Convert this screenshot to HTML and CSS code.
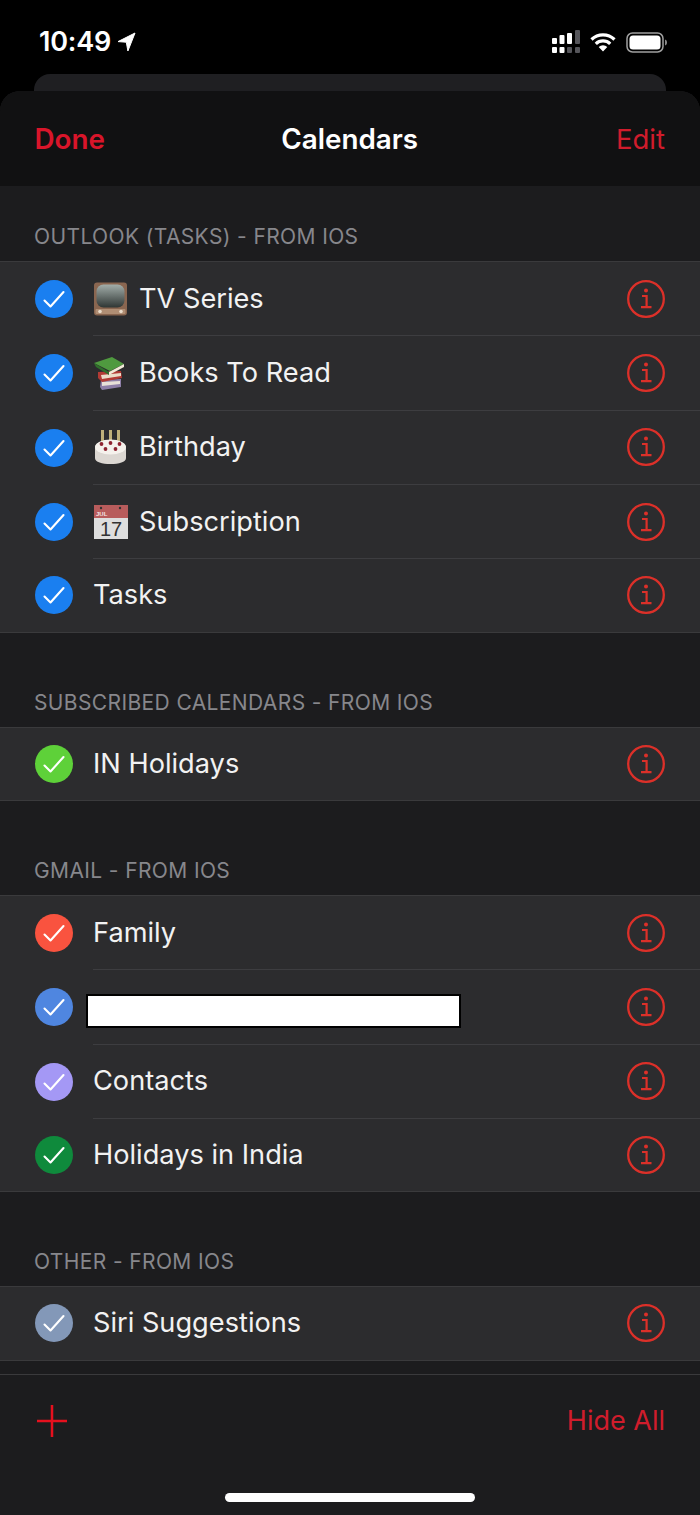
FILE: index.html
```html
<!DOCTYPE html>
<html lang="en">
<head>
<meta charset="utf-8">
<title>Calendars</title>
<link rel="stylesheet" href="styles.css">
</head>
<body>
<svg class="defs" width="0" height="0" aria-hidden="true">
  <defs>
    <symbol id="tick" viewBox="0 0 38 38"><path d="M9.500 20.500l6 6L28.500 12" fill="none" stroke="#fff" stroke-width="2.100" stroke-linecap="round" stroke-linejoin="round"/></symbol>
    <symbol id="info" viewBox="0 0 38 38"><circle cx="19" cy="19" r="17.800" fill="none" stroke="currentColor" stroke-width="2.300"/><circle cx="19" cy="10.500" r="2" fill="currentColor"/><path d="M15 16h4.600v11M14 27.200h10.500" fill="none" stroke="currentColor" stroke-width="2.200"/></symbol>
    <linearGradient id="tv-glass" x1="0" y1="0" x2="0" y2="1"><stop offset="0" stop-color="#a3aeaa"/><stop offset="1" stop-color="#2f3634"/></linearGradient>
  </defs>
</svg>
<div class="phone">
  <header class="status">
    <div class="status-left">
      <span class="time">10:49</span>
      <svg class="arrow" width="19" height="20" viewBox="0 0 19 20"><path d="M18 1L1 9.600l8.300.6 1.600 8.800z" fill="#fff" stroke="#fff" stroke-width="1" stroke-linejoin="round"/></svg>
    </div>
    <div class="status-right">
      <svg width="28" height="24" viewBox="0 0 28 24"><g fill="#fff"><rect x="0" y="8" width="5" height="6" rx="1"/><rect x="7.500" y="5" width="5" height="9" rx="1"/><rect x="15" y="3" width="5" height="11" rx="1"/><rect x="0" y="17" width="5" height="6" rx="1"/><rect x="7.500" y="17" width="5" height="6" rx="1"/></g><g fill="#55555a"><rect x="23" y="0" width="5" height="14" rx="1"/><rect x="15" y="17" width="5" height="6" rx="1"/><rect x="23" y="17" width="5" height="6" rx="1"/></g></svg>
      <svg width="26" height="20" viewBox="0 0 26 20"><path d="M1.500 7.500a16.500 16.500 0 0 1 23 0M5.800 11.800a10.500 10.500 0 0 1 14.400 0" fill="none" stroke="#fff" stroke-width="3.200"/><path d="M8.700 15l4.300 4.500 4.300-4.500a6 6 0 0 0-8.600 0z" fill="#fff"/></svg>
      <svg width="41" height="21" viewBox="0 0 41 21"><rect x="1" y="1" width="36" height="19" rx="5.500" fill="none" stroke="#a0a0a0" stroke-width="1.500"/><rect x="3.500" y="3.500" width="31" height="14" rx="3.500" fill="#fff"/><path d="M39 7.500c1.300.4 2 1.500 2 3s-.7 2.600-2 3z" fill="#8a8a8a"/></svg>
    </div>
  </header>
  <div class="back-card"></div>
  <main class="sheet">
    <nav class="nav">
      <a class="nav-done">Done</a>
      <h1 class="nav-title">Calendars</h1>
      <a class="nav-edit">Edit</a>
    </nav>

    <section class="group">
      <h2 class="group-title">OUTLOOK (TASKS) - FROM IOS</h2>
      <ul class="list">
        <li class="row">
          <span class="check c-blue"><svg width="38" height="38"><use href="#tick"/></svg></span>
          <div class="row-body">
            <svg class="emoji" width="36" height="36" viewBox="0 0 36 36"><rect x="1" y="1.500" width="33" height="33" rx="3" fill="#8a6650"/><rect x="3.500" y="3.500" width="28" height="23" rx="7" fill="url(#tv-glass)"/><rect x="2.500" y="28" width="30" height="5" rx="1" fill="#b08e74"/><circle cx="7" cy="30.500" r="1.800" fill="#e9dccb"/><circle cx="28" cy="30.500" r="1.800" fill="#e9dccb"/></svg>
            <span class="row-label">TV Series</span>
            <svg class="info" width="38" height="38"><use href="#info"/></svg>
          </div>
        </li>
        <li class="row">
          <span class="check c-blue"><svg width="38" height="38"><use href="#tick"/></svg></span>
          <div class="row-body">
            <svg class="emoji" width="36" height="36" viewBox="0 0 36 36"><path d="M8 25l20-1v8L9 35l-2-3z" fill="#8f7fa8"/><path d="M9 27l18-1v3L9 31z" fill="#e8e0d8"/><path d="M5 17l23-1 1 7-20 4-4-4z" fill="#b23a34"/><path d="M8 20l20-2v3L9 24z" fill="#ecdcc8"/><path d="M1 8l18-6 12 7-14 7z" fill="#4f9a3f"/><path d="M1 8l15 9v3L3 12z" fill="#2f6f2b"/><path d="M16 17l15-8v3l-15 8z" fill="#f2ead8"/></svg>
            <span class="row-label">Books To Read</span>
            <svg class="info" width="38" height="38"><use href="#info"/></svg>
          </div>
        </li>
        <li class="row">
          <span class="check c-blue"><svg width="38" height="38"><use href="#tick"/></svg></span>
          <div class="row-body">
            <svg class="emoji" width="36" height="36" viewBox="0 0 36 36"><g fill="#bfb07a"><rect x="8" y="1" width="3" height="12"/><rect x="16" y="1" width="3" height="12"/><rect x="24" y="1" width="3" height="12"/></g><path d="M2 19c0-5 7-8 15.500-8S33 14 33 19v10c0 4-7 6-15.500 6S2 33 2 29z" fill="#dcd7d2"/><ellipse cx="17.500" cy="18" rx="15.500" ry="7.500" fill="#f5f1ec"/><g fill="#8e2330"><circle cx="8.500" cy="15" r="1.900"/><circle cx="17.500" cy="14" r="1.900"/><circle cx="26.500" cy="15" r="1.900"/><circle cx="12.500" cy="20" r="1.900"/><circle cx="22.500" cy="20" r="1.900"/></g></svg>
            <span class="row-label">Birthday</span>
            <svg class="info" width="38" height="38"><use href="#info"/></svg>
          </div>
        </li>
        <li class="row">
          <span class="check c-blue"><svg width="38" height="38"><use href="#tick"/></svg></span>
          <div class="row-body">
            <svg class="emoji" width="36" height="36" viewBox="0 0 36 36"><rect x="1" y="1" width="34" height="34" fill="#dedede"/><rect x="1" y="1" width="34" height="13" fill="#b85c5c"/><circle cx="8" cy="4" r="1.200" fill="#333"/><circle cx="27" cy="4" r="1.200" fill="#333"/><text x="3" y="12" class="emoji-month">JUL</text><text x="18" y="32" class="emoji-day">17</text></svg>
            <span class="row-label">Subscription</span>
            <svg class="info" width="38" height="38"><use href="#info"/></svg>
          </div>
        </li>
        <li class="row">
          <span class="check c-blue"><svg width="38" height="38"><use href="#tick"/></svg></span>
          <div class="row-body">
            <span class="row-label">Tasks</span>
            <svg class="info" width="38" height="38"><use href="#info"/></svg>
          </div>
        </li>
      </ul>
    </section>

    <section class="group">
      <h2 class="group-title">SUBSCRIBED CALENDARS - FROM IOS</h2>
      <ul class="list">
        <li class="row">
          <span class="check c-green"><svg width="38" height="38"><use href="#tick"/></svg></span>
          <div class="row-body">
            <span class="row-label">IN Holidays</span>
            <svg class="info" width="38" height="38"><use href="#info"/></svg>
          </div>
        </li>
      </ul>
    </section>

    <section class="group">
      <h2 class="group-title">GMAIL - FROM IOS</h2>
      <ul class="list">
        <li class="row">
          <span class="check c-red"><svg width="38" height="38"><use href="#tick"/></svg></span>
          <div class="row-body">
            <span class="row-label">Family</span>
            <svg class="info" width="38" height="38"><use href="#info"/></svg>
          </div>
        </li>
        <li class="row">
          <span class="check c-steel"><svg width="38" height="38"><use href="#tick"/></svg></span>
          <div class="row-body">
            <span class="redacted"></span>
            <svg class="info" width="38" height="38"><use href="#info"/></svg>
          </div>
        </li>
        <li class="row">
          <span class="check c-violet"><svg width="38" height="38"><use href="#tick"/></svg></span>
          <div class="row-body">
            <span class="row-label">Contacts</span>
            <svg class="info" width="38" height="38"><use href="#info"/></svg>
          </div>
        </li>
        <li class="row">
          <span class="check c-forest"><svg width="38" height="38"><use href="#tick"/></svg></span>
          <div class="row-body">
            <span class="row-label">Holidays in India</span>
            <svg class="info" width="38" height="38"><use href="#info"/></svg>
          </div>
        </li>
      </ul>
    </section>

    <section class="group">
      <h2 class="group-title">OTHER - FROM IOS</h2>
      <ul class="list">
        <li class="row">
          <span class="check c-slate"><svg width="38" height="38"><use href="#tick"/></svg></span>
          <div class="row-body">
            <span class="row-label">Siri Suggestions</span>
            <svg class="info" width="38" height="38"><use href="#info"/></svg>
          </div>
        </li>
      </ul>
    </section>

    <footer class="footer">
      <div class="footer-bar">
        <svg width="30" height="32" viewBox="0 0 30 32"><path d="M15 0v32M0 16h30" stroke="#e6101e" stroke-width="2.500" fill="none"/></svg>
        <a class="hide-all">Hide All</a>
      </div>
      <div class="home-bar"></div>
    </footer>
  </main>
</div>
</body>
</html>
```
FILE: styles.css
```css
* { box-sizing: border-box; }
html, body { margin: 0; padding: 0; background: #000; }
.defs { display: block; height: 0; }
.phone {
  width: 700px;
  height: 1515px;
  overflow: hidden;
  display: flex;
  flex-direction: column;
  font-family: Inter, "Liberation Sans", sans-serif;
  color: #fff;
}
.status {
  height: 74px;
  padding: 26px 33px 0 39px;
  display: flex;
  justify-content: space-between;
  align-items: flex-start;
}
.status-left { display: flex; align-items: center; gap: 6px; height: 32px; }
.time { font-size: 27px; font-weight: 600; letter-spacing: -0.2px; line-height: 32px; }
.status-right { display: flex; align-items: center; gap: 10px; height: 32px; }
.back-card {
  height: 17px;
  margin: 0 34px;
  background: #1f1f22;
  border-radius: 16px 16px 0 0;
}
.sheet {
  flex: 1;
  background: #1c1c1e;
  border-radius: 20px 20px 0 0;
  overflow: hidden;
  display: flex;
  flex-direction: column;
}
.nav {
  height: 95px;
  flex: none;
  background: #111112;
  padding: 0 35px 0 34.500px;
  display: grid;
  grid-template-columns: 1fr auto 1fr;
  align-items: center;
  font-size: 27.500px;
  line-height: 32px;
}
.nav-done { color: #d9152a; font-size: 27.800px; font-weight: 600; }
.nav-title { margin: 0; font-size: 27.800px; font-weight: 600; color: #fff; }
.nav-edit { color: #d01c2c; text-align: right; font-weight: 400; }
.group-title {
  margin: 0;
  height: 75px;
  padding: 39px 0 0 34px;
  font-size: 21px;
  line-height: 24px;
  font-weight: 400;
  letter-spacing: 0.38px;
  color: #87878c;
}
.group + .group .group-title { height: 94px; padding-top: 58px; }
.list {
  list-style: none;
  margin: 0;
  padding: 0;
  background: #2c2c2e;
  border-top: 1px solid #3a3a3c;
  border-bottom: 1px solid #3a3a3c;
}
.row {
  height: 74.300px;
  padding-left: 35px;
  display: flex;
  align-items: stretch;
}
.row:last-child { height: 72.400px; }
.check {
  flex: none;
  width: 38px;
  height: 38px;
  margin: auto 20px auto 0;
  border-radius: 50%;
  display: block;
}
.check svg { display: block; }
.c-blue { background: #1a7ff0; }
.c-green { background: #5ed139; }
.c-red { background: #f9533f; }
.c-steel { background: #4f86e0; }
.c-violet { background: #a498f5; }
.c-forest { background: #0f8a3c; }
.c-slate { background: #8398b8; }
.row-body {
  flex: 1;
  min-width: 0;
  display: flex;
  align-items: center;
  padding-right: 35px;
  border-bottom: 1px solid #3d3d40;
}
.row:last-child .row-body { border-bottom: 0; }
.emoji { flex: none; margin-right: 10px; }
.emoji-month { font-size: 6px; font-weight: 700; fill: #f3e4e4; font-family: "Liberation Sans", sans-serif; }
.emoji-day { font-size: 20px; text-anchor: middle; fill: #333; font-family: "Liberation Sans", sans-serif; }
.row-label {
  flex: 1;
  font-size: 27.200px;
  line-height: 34px;
  color: #f2f2f2;
}
.redacted {
  flex: none;
  width: 375px;
  height: 34px;
  margin: 8px auto 0 -7px;
  background: #fff;
  border: 2px solid #000;
}
.info { flex: none; color: #dc3029; margin-left: auto; }
.footer {
  margin-top: 13px;
  flex: 1;
  border-top: 1px solid #3a3a3c;
  display: flex;
  flex-direction: column;
  align-items: center;
}
.footer-bar {
  align-self: stretch;
  padding: 30px 35px 0 37px;
  display: flex;
  justify-content: space-between;
  align-items: center;
}
.hide-all { color: #d01c2c; font-size: 27px; line-height: 32px; }
.home-bar {
  width: 250px;
  height: 9px;
  margin-top: 56px;
  background: #fff;
  border-radius: 5px;
}
```
